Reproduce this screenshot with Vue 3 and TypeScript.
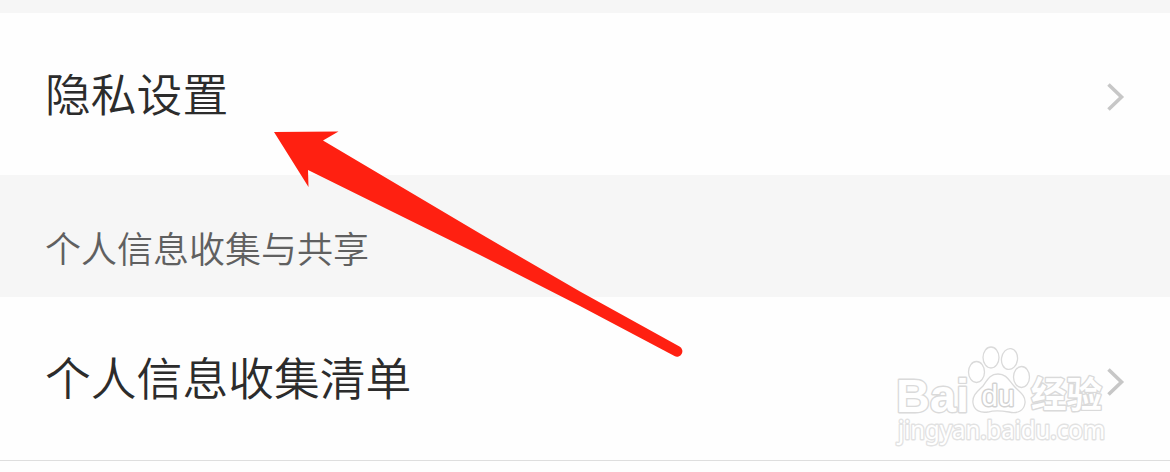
<script setup lang="ts">
interface Row {
  title: string
  last?: boolean
}
const privacy: Row = { title: '隐私设置' }
const section = '个人信息收集与共享'
const list: Row = { title: '个人信息收集清单', last: true }
</script>

<template>
  <main class="page">
    <div class="gap"></div>
    <div class="row">
      <span class="title">{{ privacy.title }}</span>
      <svg class="chevron" width="22" height="32" viewBox="0 0 22 32">
        <path d="M3.5 3.5 16.500 16 3.500 28.500" />
      </svg>
    </div>
    <h2 class="section">{{ section }}</h2>
    <div class="row" :class="{ last: list.last }">
      <span class="title">{{ list.title }}</span>
      <svg class="chevron" width="22" height="32" viewBox="0 0 22 32">
        <path d="M3.5 3.5 16.500 16 3.500 28.500" />
      </svg>
    </div>

    <svg class="arrow" width="1170" height="472" viewBox="0 0 1170 472">
      <path
        d="M274 132 338.500 131.500 323 140.500 480 233.500 580 291.500 679.500 346.500A5.200 5.200 0 0 1 674.500 356L580 306 480 255 308 170 308.500 187Z"
      />
    </svg>

    <svg class="watermark" width="230" height="110" viewBox="890 340 230 110">
      <g class="mark">
        <text class="latin" x="896" y="411.500" textLength="73" lengthAdjust="spacingAndGlyphs">Bai</text>
        <ellipse cx="976.500" cy="372" rx="8" ry="10.500" />
        <ellipse cx="991" cy="357.500" rx="8" ry="10.500" />
        <ellipse cx="1009.500" cy="359" rx="8" ry="10.500" transform="rotate(8 1009.500 359)" />
        <ellipse cx="1021.500" cy="377" rx="8" ry="10.500" />
        <path
          d="M998 374C989 374 987 381 983 386C978 391 972 395 973 403C974 411 981 413 988 412C995 410 1003 411 1009 412C1017 414 1024 411 1025 403C1026 395 1018 391 1014 386C1009 381 1007 374 998 374Z"
        />
        <text class="du" x="981.500" y="406" textLength="33" lengthAdjust="spacingAndGlyphs">du</text>
        <text class="cjk" x="1031" y="408" textLength="71" lengthAdjust="spacingAndGlyphs">经验</text>
        <text class="url" x="898" y="439" textLength="207" lengthAdjust="spacingAndGlyphs">jingyan.baidu.com</text>
      </g>
    </svg>
  </main>
</template>

<style>
body {
  margin: 0;
  background: #fff;
}
</style>

<style scoped>
.page {
  position: relative;
  width: 1170px;
  height: 472px;
  overflow: hidden;
  background: #fefefe;
  font-family: "Noto Sans CJK SC", sans-serif;
}
.gap {
  height: 13px;
  background: #f6f6f6;
}
.row {
  box-sizing: border-box;
  height: 162px;
  padding: 6px 43px 0 45px;
  display: flex;
  align-items: center;
  justify-content: space-between;
}
.row.last {
  height: 164px;
  border-bottom: 1px solid #dedede;
}
.title {
  margin-bottom: 11px;
  font-size: 45.8px;
  line-height: 60px;
  font-weight: 350;
  color: #2c2c2c;
}
.chevron path {
  fill: none;
  stroke: #c7c7c7;
  stroke-width: 3.6;
}
.section {
  box-sizing: border-box;
  height: 122px;
  margin: 0;
  padding: 48px 45px 0;
  background: #f6f6f6;
  color: #606060;
  font-size: 36px;
  line-height: 48px;
  font-weight: 350;
}
.arrow {
  position: absolute;
  left: 0;
  top: 0;
  fill: #ff2011;
}
.watermark {
  position: absolute;
  left: 890px;
  top: 340px;
}
.mark {
  fill: #fff;
  stroke: #dadada;
  stroke-width: 1.3;
  stroke-linejoin: round;
}
.mark text {
  paint-order: stroke;
  stroke-width: 2.8;
}
.latin {
  font: bold 47px "Liberation Sans", sans-serif;
}
.mark .du {
  font: 29px "Liberation Sans", sans-serif;
  stroke: #d2d2d2;
  stroke-width: 2.8;
}
.cjk {
  font: 700 36px "Noto Sans CJK SC", sans-serif;
}
.mark .url {
  font: 25px "Noto Sans", sans-serif;
  stroke: #e2e2e2;
}
</style>
